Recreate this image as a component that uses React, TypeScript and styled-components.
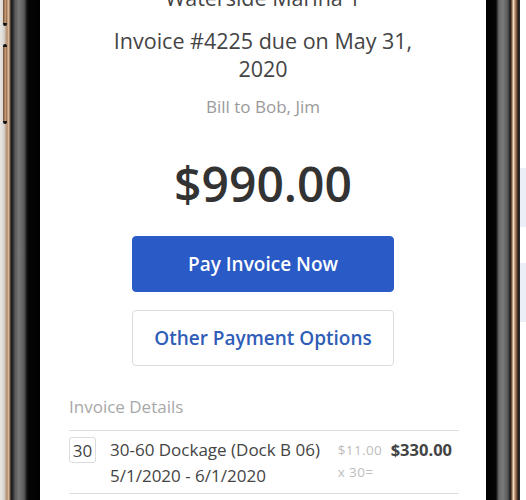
import React from "react";
import styled, { createGlobalStyle } from "styled-components";

type LineItem = {
    qty: number;
    title: string;
    period: string;
    rate: string;
    total: string;
};

const items: Array<LineItem> = [
    {
        qty: 30,
        title: "30-60 Dockage (Dock B 06)",
        period: "5/1/2020 - 6/1/2020",
        rate: "$11.00",
        total: "$330.00",
    },
    {
        qty: 30,
        title: "Electric (Dock B 06)",
        period: "5/1/2020 - 6/1/2020",
        rate: "$22.00",
        total: "$660.00",
    },
];

const GlobalStyle = createGlobalStyle`
    html, body {
        margin: 0;
        padding: 0;
        background: #fff;
    }
    body {
        font-family: "Open Sans", "Noto Sans", sans-serif;
        color: #444;
    }
`;

const Stage = styled.div`
    display: flex;
    width: 526px;
    height: 500px;
    overflow: hidden;
`;

const LeftBezel = styled.div`
    position: relative;
    width: 40px;
    flex-shrink: 0;
    background: linear-gradient(
        to right,
        #e8e6e4 0px,
        #d9d4cf 4px,
        #b08a6a 7px,
        #d9b89a 8.5px,
        #8a6a50 10px,
        #1a1a1a 11px,
        #2c2c2c 13px,
        #5a5a5a 15px,
        #777 19px,
        #5c5c5c 24px,
        #2a2a2a 26px,
        #050505 28px,
        #000 40px
    );
`;

const SideButton = styled.span<{ $top: number; $height: number }>`
    position: absolute;
    left: 3px;
    top: ${({ $top }) => $top}px;
    width: 4px;
    height: ${({ $height }) => $height}px;
    border-radius: 2px;
    background: linear-gradient(to right, #6b4c34, #c49a74 60%, #8a6446);
    border-top: 3px solid #111;
    border-bottom: 3px solid #111;
`;

const RightBezel = styled.div`
    position: relative;
    width: 34px;
    flex-shrink: 0;
    background: linear-gradient(
        to right,
        #000 0px,
        #050505 10px,
        #2e2e2e 11px,
        #6a6a6a 13px,
        #7a7a7a 17px,
        #555 22px,
        #1c1c1c 24px,
        #3a2a1e 25px,
        #9a7456 26px,
        #f0dcc8 27.5px,
        #b88c68 29px,
        #6b4a32 31px,
        #1c1c1c 32px,
        #2a2a2a 34px
    );
`;

const Backdrop = styled.div`
    flex: 1;
    display: flex;
    flex-direction: column;
    gap: 36px;
    padding-top: 168px;
    background: #fff;
`;

const BackdropPanel = styled.div`
    height: 59px;
    background: #eceef7;
`;

const Screen = styled.div`
    width: 446px;
    flex-shrink: 0;
    overflow: hidden;
    background: #fff;
    display: flex;
    flex-direction: column;
    align-items: center;
    text-align: center;

    & > * {
        flex-shrink: 0;
    }
`;

const MarinaName = styled.div`
    margin-top: -16px;
    font-size: 21.5px;
    line-height: 28px;
    color: #444;
`;

const InvoiceHeading = styled.div`
    margin-top: 15px;
    width: 320px;
    font-size: 21.5px;
    line-height: 28px;
    color: #444;
`;

const BillTo = styled.div`
    margin-top: 14px;
    font-size: 17px;
    line-height: 20px;
    color: #9a9a9a;
`;

const Amount = styled.div`
    margin-top: 39px;
    font-size: 48px;
    line-height: 56px;
    font-weight: 600;
    color: #333;
`;

const Button = styled.button<{ $primary?: boolean }>`
    box-sizing: border-box;
    width: 262px;
    height: 56px;
    margin-top: ${({ $primary }) => ($primary ? "24px" : "18px")};
    border-radius: 4px;
    font-family: inherit;
    font-size: 19px;
    font-weight: 600;
    cursor: pointer;
    border: 1px solid ${({ $primary }) => ($primary ? "#2a5ac6" : "#dcdcdc")};
    background: ${({ $primary }) => ($primary ? "#2a5ac6" : "#fff")};
    color: ${({ $primary }) => ($primary ? "#fff" : "#2f5db8")};
`;

const Details = styled.section`
    align-self: stretch;
    margin: 30px 27px 0 29px;
    text-align: left;
`;

const DetailsLabel = styled.div`
    font-size: 17px;
    line-height: 22px;
    color: #a8a8a8;
    padding-bottom: 12px;
    border-bottom: 1px solid #dedede;
`;

const Row = styled.div`
    display: flex;
    align-items: flex-start;
    padding: 6px 0 4px;
    border-bottom: 1px solid #dedede;
`;

const Qty = styled.div`
    box-sizing: border-box;
    width: 27px;
    height: 26px;
    flex-shrink: 0;
    border: 1px solid #dcdcdc;
    border-radius: 3px;
    display: flex;
    align-items: center;
    justify-content: center;
    font-size: 17px;
    color: #444;
`;

const Description = styled.div`
    flex: 1;
    margin-left: 14px;
    font-size: 17px;
    line-height: 26px;
    color: #444;
`;

const Rate = styled.div`
    width: 53px;
    font-size: 13.5px;
    line-height: 22px;
    letter-spacing: 0.4px;
    color: #bdbdbd;
    margin-top: 2px;
`;

const Total = styled.div`
    font-size: 16.5px;
    line-height: 26px;
    font-weight: 700;
    color: #444;
    margin-right: 7px;
`;

const App: React.FC = () => {
    return (
        <>
            <GlobalStyle />
            <Stage>
                <LeftBezel>
                    <SideButton $top={-10} $height={30} />
                    <SideButton $top={44} $height={74} />
                </LeftBezel>
                <Screen>
                    <MarinaName>Waterside Marina 1</MarinaName>
                    <InvoiceHeading>
                        Invoice #4225 due on May 31, 2020
                    </InvoiceHeading>
                    <BillTo>Bill to Bob, Jim</BillTo>
                    <Amount>$990.00</Amount>
                    <Button type="button" $primary>
                        Pay Invoice Now
                    </Button>
                    <Button type="button">Other Payment Options</Button>
                    <Details>
                        <DetailsLabel>Invoice Details</DetailsLabel>
                        {items.map((item) => (
                            <Row key={item.title}>
                                <Qty>{item.qty}</Qty>
                                <Description>
                                    {item.title}
                                    <br />
                                    {item.period}
                                </Description>
                                <Rate>
                                    {item.rate}
                                    <br />x {item.qty}=
                                </Rate>
                                <Total>{item.total}</Total>
                            </Row>
                        ))}
                    </Details>
                </Screen>
                <RightBezel />
                <Backdrop>
                    <BackdropPanel />
                    <BackdropPanel />
                </Backdrop>
            </Stage>
        </>
    );
};

export default App;
